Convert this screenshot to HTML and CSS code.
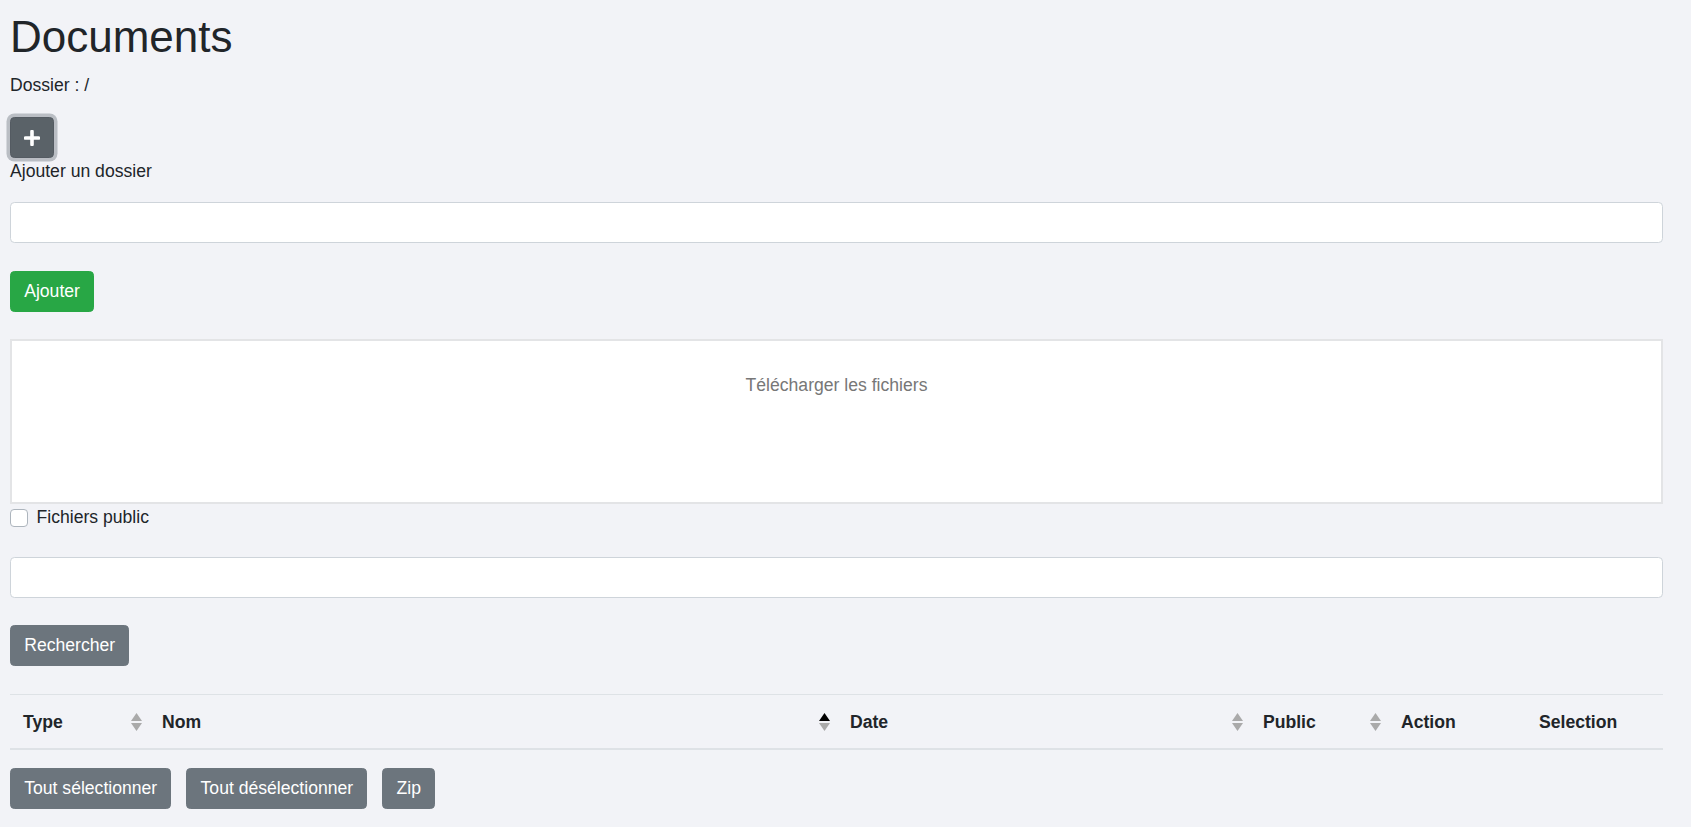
FILE: index.html
```html
<!DOCTYPE html>
<html lang="fr">
<head>
<meta charset="utf-8">
<title>Documents</title>
<link rel="stylesheet" href="styles.css">
</head>
<body>
<div class="page">
  <h1 class="title">Documents</h1>
  <p class="folder">Dossier : /</p>
  <div class="add-wrap">
    <button class="btn btn-plus" type="button" aria-label="Ajouter">
      <svg width="16" height="16" viewBox="0 0 16 16"><path d="M8 1.5v13M1.5 8h13" stroke="#fff" stroke-width="3.6" stroke-linecap="round" fill="none"/></svg>
    </button>
  </div>
  <label class="field-label">Ajouter un dossier</label>
  <input class="input" type="text">
  <button class="btn btn-success" type="button">Ajouter</button>
  <div class="dropzone"><div class="dz-message">Télécharger les fichiers</div></div>
  <label class="check-row"><span class="checkbox"></span><span>Fichiers public</span></label>
  <input class="input input-search" type="text">
  <button class="btn btn-secondary" type="button">Rechercher</button>
  <table class="table">
    <colgroup>
      <col class="c-type"><col class="c-nom"><col class="c-date"><col class="c-public"><col class="c-action"><col class="c-sel">
    </colgroup>
    <thead>
      <tr>
        <th><div class="th-inner"><span>Type</span><svg class="sort" width="11" height="18" viewBox="0 0 11 18"><path d="M5.5 0L11 8H0z" fill="#aaa"/><path d="M0 10h11L5.5 18z" fill="#aaa"/></svg></div></th>
        <th><div class="th-inner"><span>Nom</span><svg class="sort" width="11" height="18" viewBox="0 0 11 18"><path d="M5.5 0L11 8H0z" fill="#000"/><path d="M0 10h11L5.5 18z" fill="#aaa"/></svg></div></th>
        <th><div class="th-inner"><span>Date</span><svg class="sort" width="11" height="18" viewBox="0 0 11 18"><path d="M5.5 0L11 8H0z" fill="#aaa"/><path d="M0 10h11L5.5 18z" fill="#aaa"/></svg></div></th>
        <th><div class="th-inner"><span>Public</span><svg class="sort" width="11" height="18" viewBox="0 0 11 18"><path d="M5.5 0L11 8H0z" fill="#aaa"/><path d="M0 10h11L5.5 18z" fill="#aaa"/></svg></div></th>
        <th><div class="th-inner"><span>Action</span></div></th>
        <th><div class="th-inner"><span>Selection</span></div></th>
      </tr>
    </thead>
  </table>
  <div class="actions">
    <button class="btn btn-secondary" type="button">Tout sélectionner</button>
    <button class="btn btn-secondary" type="button">Tout désélectionner</button>
    <button class="btn btn-secondary" type="button">Zip</button>
  </div>
</div>
</body>
</html>
```
FILE: styles.css
```css
html, body {
  margin: 0;
  padding: 0;
  background: #f2f3f7;
}
body {
  font-family: "Liberation Sans", Arial, sans-serif;
  font-size: 17.6px;
  line-height: 26px;
  color: #212529;
}
.page {
  width: 1653px;
  padding: 11px 0 0 10px;
}
.title {
  margin: 0 0 9px;
  font-size: 44px;
  line-height: 52px;
  font-weight: 400;
}
.folder {
  margin: 0 0 19px;
}
.add-wrap {
  height: 41px;
}
.btn {
  display: inline-block;
  box-sizing: border-box;
  height: 41px;
  padding: 0 13.2px;
  border: 1px solid transparent;
  border-radius: 4.4px;
  font-family: inherit;
  font-size: 17.6px;
  line-height: 39px;
  color: #fff;
  cursor: pointer;
  vertical-align: top;
}
.btn-plus {
  width: 44px;
  padding: 0;
  background: #5a6268;
  border-color: #545b62;
  box-shadow: 0 0 0 3.5px rgba(130, 138, 145, 0.5);
  display: flex;
  align-items: center;
  justify-content: center;
}
.btn-success {
  display: block;
  background: #28a745;
  border-color: #28a745;
  margin-bottom: 27px;
}
.btn-secondary {
  background: #6c757d;
  border-color: #6c757d;
}
.input-search + .btn-secondary {
  display: block;
  margin-bottom: 28px;
}
.field-label {
  display: block;
  margin: 0 0 18px;
}
.input {
  display: block;
  box-sizing: border-box;
  width: 1653px;
  height: 41px;
  margin: 0 0 28px;
  padding: 0 13px;
  background: #fff;
  border: 1px solid #ced4da;
  border-radius: 4.4px;
  font-family: inherit;
  font-size: 17.6px;
}
.input-search {
  margin-bottom: 27px;
}
.dropzone {
  box-sizing: border-box;
  height: 165px;
  background: #fff;
  border: 2px solid #e3e4e6;
  padding-top: 31px;
  text-align: center;
}
.dz-message {
  color: #777;
}
.check-row {
  display: flex;
  align-items: center;
  gap: 9px;
  height: 26px;
  margin-bottom: 27px;
}
.checkbox {
  box-sizing: border-box;
  width: 17.5px;
  height: 17.5px;
  background: #fff;
  border: 1px solid #adb5bd;
  border-radius: 4px;
  margin-top: 2px;
}
.table {
  width: 1653px;
  table-layout: fixed;
  border-collapse: collapse;
  margin-bottom: 18px;
}
.c-type { width: 139px; }
.c-nom { width: 688px; }
.c-date { width: 413px; }
.c-public { width: 138px; }
.c-action { width: 138px; }
.c-sel { width: 137px; }
.table th {
  padding: 13.5px 7px 13px 13px;
  border-top: 1px solid #dee2e6;
  border-bottom: 2px solid #dee2e6;
  text-align: left;
  font-weight: 700;
  line-height: 26px;
}
.th-inner {
  display: flex;
  align-items: center;
  justify-content: space-between;
}
.sort {
  display: block;
  margin-top: 1px;
}
.actions {
  display: flex;
  gap: 15px;
}
```
